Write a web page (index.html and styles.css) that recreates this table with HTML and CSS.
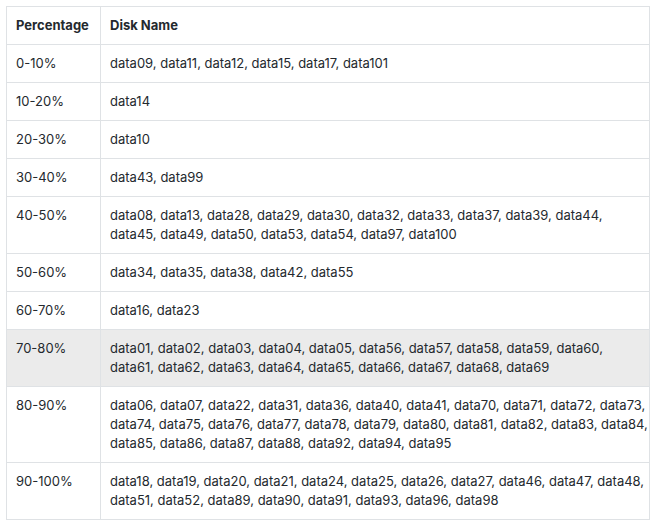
FILE: index.html
```html
<!DOCTYPE html>
<html>
<head>
<meta charset="utf-8">
<link rel="stylesheet" href="styles.css">
</head>
<body>
<table class="disk-table">
  <thead>
    <tr><th class="col-pct">Percentage</th><th class="col-name">Disk Name</th></tr>
  </thead>
  <tbody>
    <tr><td>0-10%</td><td>data09, data11, data12, data15, data17, data101</td></tr>
    <tr><td>10-20%</td><td>data14</td></tr>
    <tr><td>20-30%</td><td>data10</td></tr>
    <tr><td>30-40%</td><td>data43, data99</td></tr>
    <tr><td>40-50%</td><td>data08, data13, data28, data29, data30, data32, data33, data37, data39, data44,<br>data45, data49, data50, data53, data54, data97, data100</td></tr>
    <tr><td>50-60%</td><td>data34, data35, data38, data42, data55</td></tr>
    <tr><td>60-70%</td><td>data16, data23</td></tr>
    <tr class="hl"><td>70-80%</td><td>data01, data02, data03, data04, data05, data56, data57, data58, data59, data60,<br>data61, data62, data63, data64, data65, data66, data67, data68, data69</td></tr>
    <tr><td>80-90%</td><td>data06, data07, data22, data31, data36, data40, data41, data70, data71, data72, data73,<br>data74, data75, data76, data77, data78, data79, data80, data81, data82, data83, data84,<br>data85, data86, data87, data88, data92, data94, data95</td></tr>
    <tr><td>90-100%</td><td>data18, data19, data20, data21, data24, data25, data26, data27, data46, data47, data48,<br>data51, data52, data89, data90, data91, data93, data96, data98</td></tr>
  </tbody>
</table>
</body>
</html>
```
FILE: styles.css
```css
html, body {
  margin: 0;
  padding: 0;
  background: #ffffff;
}
body {
  padding: 6px 0 0 6px;
  font-family: Inter, "Noto Sans", sans-serif;
  font-size: 13px;
  line-height: 19px;
  color: #24292e;
}
.disk-table {
  border-collapse: collapse;
  border-spacing: 0;
  width: 644px;
  table-layout: fixed;
}
.disk-table th,
.disk-table td {
  border: 1px solid #dfe2e5;
  padding: 9px 9px;
  text-align: left;
  vertical-align: top;
  white-space: nowrap;
}
.disk-table th {
  font-weight: 700;
}
.col-pct {
  width: 75px;
}
.disk-table tr.hl {
  background: #ebebeb;
}
```
